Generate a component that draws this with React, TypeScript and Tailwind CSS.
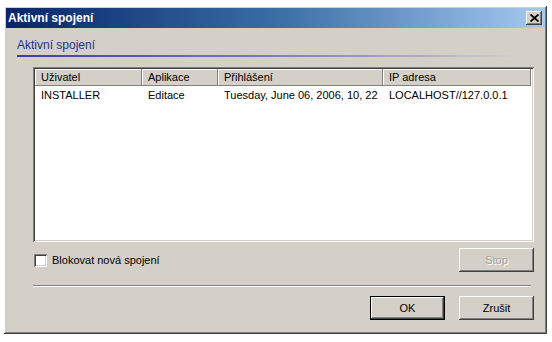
import React from "react";

const raised =
  "shadow-[inset_-1px_-1px_#404040,inset_1px_1px_#ffffff,inset_-2px_-2px_#808080,inset_2px_2px_#d4d0c8]";
const sunken =
  "shadow-[inset_1px_1px_#808080,inset_-1px_-1px_#ffffff,inset_2px_2px_#404040,inset_-2px_-2px_#d4d0c8]";

const columns = [
  { label: "Uživatel", w: "w-[107px]" },
  { label: "Aplikace", w: "w-[76px]" },
  { label: "Přihlášení", w: "w-[165px]" },
  { label: "IP adresa", w: "w-[148px]" },
];

const row = ["INSTALLER", "Editace", "Tuesday, June 06, 2006, 10, 22", "LOCALHOST//127.0.0.1"];

function Button({ label, disabled, isDefault }: { label: string; disabled?: boolean; isDefault?: boolean }) {
  return (
    <button
      className={`h-[24px] w-[75px] bg-[#d4d0c8] text-[11px] ${
        isDefault
          ? "shadow-[inset_0_0_0_1px_#000000,inset_-2px_-2px_#404040,inset_2px_2px_#ffffff,inset_-3px_-3px_#808080]"
          : raised
      } ${disabled ? "text-[#a0a0a0] [text-shadow:1px_1px_#ffffff]" : "text-black"}`}
    >
      {label}
    </button>
  );
}

export default function App() {
  return (
    <div className="h-[342px] w-[552px] overflow-hidden bg-white pt-[6px] pl-[4px] font-['Liberation_Sans',Arial,sans-serif]">
      <div className={`flex h-[328px] w-[543px] flex-col bg-[#d4d0c8] p-[2px] ${raised}`}>
        {/* Title bar */}
        <div className="flex h-[20px] items-center justify-between bg-gradient-to-r from-[#0a246a] via-[#3a6ea5] to-[#a6caf0] pl-[2px] pr-[3px]">
          <span className="text-[12px] font-bold text-white">Aktivní spojení</span>
          <div className={`flex h-[14px] w-[16px] items-center justify-center bg-[#d4d0c8] ${raised}`}>
            <svg width="9" height="8" viewBox="0 0 9 8">
              <path d="M0.5 0.5L8.5 7.5M8.5 0.5L0.5 7.5" stroke="#000" strokeWidth="1.8" />
            </svg>
          </div>
        </div>

        {/* Group label */}
        <div className="ml-[11px] mt-[10px] w-[504px]">
          <div className="text-[12px] leading-[14px] text-[#1f2f8c]">Aktivní spojení</div>
          <div className="mt-[3px] h-[2px] bg-gradient-to-r from-[#3c3ca8] via-[#7a7ac0] to-[#d4d0c8]" />
        </div>

        {/* List view */}
        <div className={`ml-[27px] mt-[10px] h-[175px] w-[501px] bg-white p-[2px] ${sunken}`}>
          <div className="flex h-[17px]">
            {columns.map((c) => (
              <div
                key={c.label}
                className={`${c.w} flex items-center bg-[#d4d0c8] pl-[6px] text-[11px] text-black shadow-[inset_-1px_-1px_#808080,inset_1px_1px_#ffffff]`}
              >
                {c.label}
              </div>
            ))}
          </div>
          <div className="mt-[1px] flex h-[17px] items-center text-[11px] text-black">
            {row.map((v, i) => (
              <div key={i} className={`${columns[i].w} pl-[6px] whitespace-nowrap`}>
                {v}
              </div>
            ))}
          </div>
        </div>

        {/* Checkbox + Stop */}
        <div className="ml-[28px] mt-[6px] flex w-[500px] items-center justify-between">
          <label className="flex items-center gap-[5px] text-[11px] text-black">
            <span className={`h-[13px] w-[13px] bg-white ${sunken}`} />
            Blokovat nová spojení
          </label>
          <Button label="Stop" disabled />
        </div>

        {/* Separator */}
        <div className="ml-[27px] mt-[13px] h-[2px] w-[498px] border-t border-b border-t-[#808080] border-b-white" />

        {/* Bottom buttons */}
        <div className="ml-[27px] mt-[9px] flex w-[501px] justify-end gap-[14px]">
          <Button label="OK" isDefault />
          <Button label="Zrušit" />
        </div>
      </div>
    </div>
  );
}
